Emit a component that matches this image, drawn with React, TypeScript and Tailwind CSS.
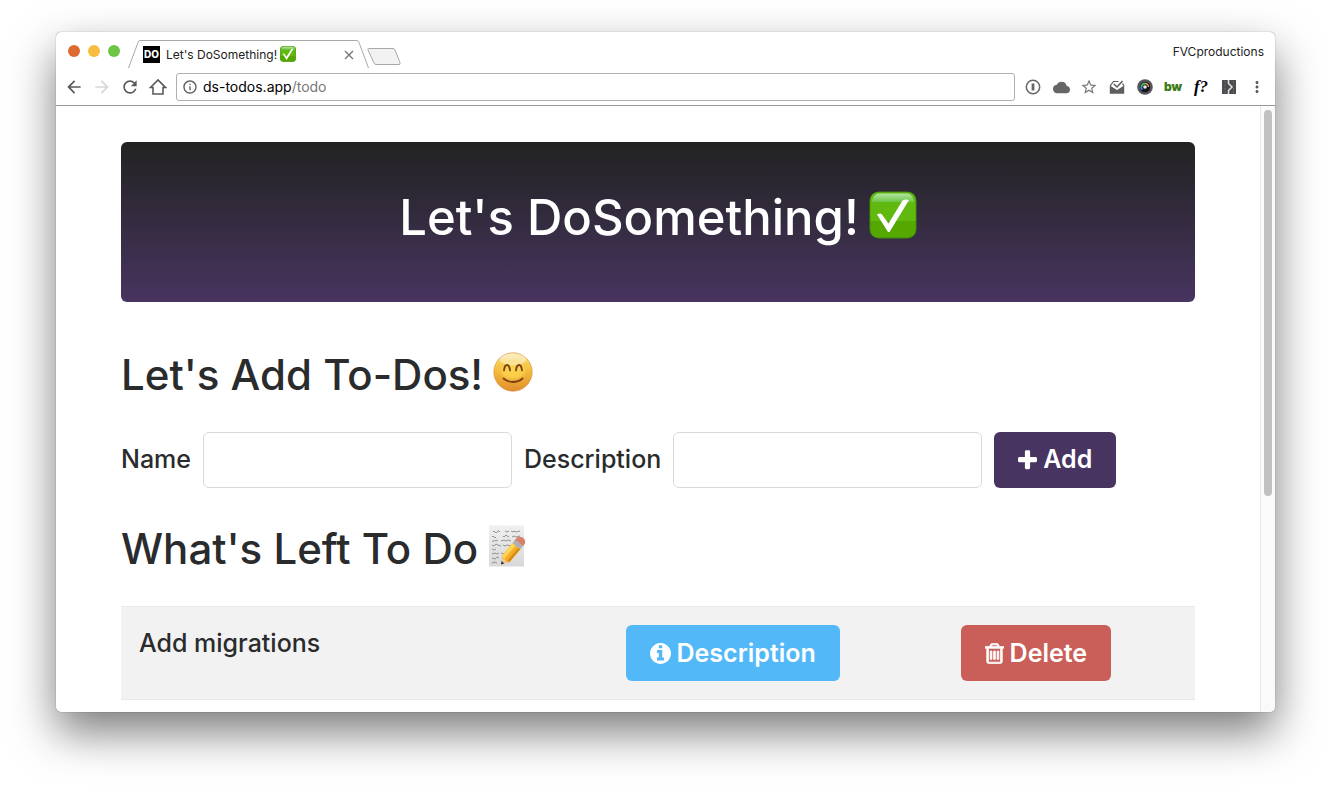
import { ReactNode } from "react";
import { MdArrowBack, MdArrowForward, MdCloud, MdMoreVert, MdOutlineInfo, MdRefresh, MdStarBorder } from "react-icons/md";

interface IconProps {
    className?: string;
}

function PlusIcon() {
    return (
        <svg viewBox="192 128 1408 1536" className="h-[21px] w-[19px]" fill="currentColor">
            <path d="M1600 736v192q0 40-28 68t-68 28h-416v416q0 40-28 68t-68 28h-192q-40 0-68-28t-28-68v-416h-416q-40 0-68-28t-28-68v-192q0-40 28-68t68-28h416v-416q0-40 28-68t68-28h192q40 0 68 28t28 68v416h416q40 0 68 28t28 68z" />
        </svg>
    );
}

function InfoIcon() {
    return (
        <svg viewBox="128 128 1536 1536" className="h-[21px] w-[21px]" fill="currentColor">
            <path d="M1152 1376v-160q0-14-9-23t-23-9h-96v-512q0-14-9-23t-23-9h-320q-14 0-23 9t-9 23v160q0 14 9 23t23 9h96v320h-96q-14 0-23 9t-9 23v160q0 14 9 23t23 9h448q14 0 23-9t9-23zm-128-896v-160q0-14-9-23t-23-9h-192q-14 0-23 9t-9 23v160q0 14 9 23t23 9h192q14 0 23-9t9-23zm640 416q0 209-103 385.5t-279.5 279.5-385.5 103-385.5-103-279.5-279.5-103-385.5 103-385.5 279.5-279.5 385.5-103 385.5 103 279.5 279.5 103 385.5z" />
        </svg>
    );
}

function TrashIcon() {
    return (
        <svg viewBox="192 128 1408 1536" className="h-[21px] w-[19px]" fill="currentColor" stroke="currentColor" strokeWidth="56">
            <path d="M704 736v576q0 14-9 23t-23 9h-64q-14 0-23-9t-9-23v-576q0-14 9-23t23-9h64q14 0 23 9t9 23zm256 0v576q0 14-9 23t-23 9h-64q-14 0-23-9t-9-23v-576q0-14 9-23t23-9h64q14 0 23 9t9 23zm256 0v576q0 14-9 23t-23 9h-64q-14 0-23-9t-9-23v-576q0-14 9-23t23-9h64q14 0 23 9t9 23zm128 724v-948h-896v948q0 22 7 40.5t14.5 27 10.5 8.5h832q3 0 10.5-8.5t14.5-27 7-40.5zm-672-1076h448l-48-117q-7-9-17-11h-317q-10 2-17 11zm928 32v64q0 14-9 23t-23 9h-96v948q0 83-47 143.5t-113 60.5h-832q-66 0-113-58.5t-47-141.5v-952h-96q-14 0-23-9t-9-23v-64q0-14 9-23t23-9h309l70-167q15-37 54-63t79-26h320q40 0 79 26t54 63l70 167h309q14 0 23 9t9 23z" />
        </svg>
    );
}

function CheckEmoji({ className }: IconProps) {
    return (
        <svg viewBox="0 0 48 48" className={className} aria-hidden="true">
            <defs>
                <linearGradient id="gloss" x1="0" y1="0" x2="0" y2="1">
                    <stop offset="0" stopColor="#b4e3a4" />
                    <stop offset="1" stopColor="#6cc644" />
                </linearGradient>
            </defs>
            <rect x="0.5" y="0.5" width="47" height="47" rx="9" fill="#3f8a0a" />
            <rect x="1.5" y="1.5" width="45" height="45" rx="8" fill="#55a800" />
            <path d="M9 1.5h30a7.5 7.5 0 0 1 7.5 8V30h-45V9.5a7.5 7.5 0 0 1 7.5-8z" fill="#61b90f" />
            <path d="M9 2.5h30q5 1 6 8.5H3q1-7.5 6-8.5z" fill="url(#gloss)" />
            <path d="M8 23.5q3-2 5 0l6.500 9L33.500 9.500q3-1.500 6.500-.5L20.500 41h-1.500z" fill="#fff" />
        </svg>
    );
}

function SmileEmoji() {
    return (
        <svg viewBox="0 0 40 40" className="mb-[6px] size-10" aria-hidden="true">
            <defs>
                <linearGradient id="face" x1="0" y1="0" x2="0" y2="1">
                    <stop offset="0" stopColor="#fbe3a0" />
                    <stop offset="0.25" stopColor="#f6cf52" />
                    <stop offset="0.5" stopColor="#f2b93c" />
                    <stop offset="1" stopColor="#e08e2c" />
                </linearGradient>
                <radialGradient id="glow">
                    <stop offset="0" stopColor="#fcd34c" />
                    <stop offset="0.7" stopColor="#fad04a" stopOpacity="0.9" />
                    <stop offset="1" stopColor="#f6c244" stopOpacity="0" />
                </radialGradient>
            </defs>
            <circle cx="20" cy="20" r="19.2" fill="url(#face)" stroke="#d58a3a" strokeWidth="0.6" />
            <ellipse cx="20" cy="18" rx="15" ry="11" fill="url(#glow)" />
            <ellipse cx="20" cy="7.5" rx="13" ry="6" fill="#fff" opacity="0.4" />
            <g fill="none" stroke="#7a3f17" strokeWidth="1.8" strokeLinecap="round">
                <path d="M11 18.5q.5-5.500 3-5.500t3 5.500M23 18.5q.5-5.500 3-5.500t3 5.500" />
                <path d="M10.500 26.500q4 3.500 9.500 3.500t9.500-3.500" />
            </g>
        </svg>
    );
}

function MemoEmoji() {
    return (
        <svg viewBox="0 0 40 42" className="mb-[6px] h-[42px] w-10" aria-hidden="true">
            <defs>
                <linearGradient id="paper" x1="0" y1="0" x2="0" y2="1">
                    <stop offset="0" stopColor="#f0f0f0" />
                    <stop offset="1" stopColor="#d8d8d8" />
                </linearGradient>
            </defs>
            <path d="M1 .5h35v41H1z" fill="url(#paper)" />
            <g fill="none" stroke="#888" strokeWidth="0.9">
                <path d="M5 7q1-2 2 0t2 0 2-1l1 1M17 6l2 1 2-1M23 6l2 1 1-1 2 1 4-1" />
                <path d="M4 12q1-2 2 0t2 0M15 11q1 2 2 0t2 0l2 1M24 12l2-1 2 1 4-1" />
                <path d="M4 16h3l1-1 2 1M13 16l3-1 2 1 2-1 3 1M26 16l3-1 2 1" />
                <path d="M4 20l2 1 2-2 2 1 3 1M15 20l2 1 2-1 4 1" />
                <path d="M4 24l2 1 2-1M4 29l3-1 2 1 2-1M13 28l3 1M4 33l3 1 2-2 2 1M4 38l3-1 2 1" />
            </g>
            <g transform="translate(13 39.5) rotate(-50)">
                <path d="M0 0l8-5v10z" fill="#eac69a" />
                <path d="M0 0l3-1.900v3.800z" fill="#333" />
                <path d="M7 -5h17v10h-17l-1.500-2.500 1-2.500-1-2.500z" fill="#f4ad24" />
                <path d="M7 -5h17v4h-18z" fill="#fcd558" />
                <path d="M7 2.500h17v2.500h-17z" fill="#d98b13" />
                <path d="M24 -5h4v10h-4z" fill="#aab0b8" />
                <path d="M28 -5h3q3.500 1 3.500 5t-3.500 5h-3z" fill="#d9806d" />
            </g>
        </svg>
    );
}

function ExtensionIcons() {
    return (
        <div className="flex items-center text-[#6a6a6a] [&>*]:flex [&>*]:h-7 [&>*]:w-7 [&>*]:items-center [&>*]:justify-center">
            <button aria-label="Password manager">
                <svg viewBox="0 0 16 16" className="size-4" fill="none" stroke="#666">
                    <circle cx="8" cy="8" r="6.7" strokeWidth="1.5" />
                    <path d="M8 4.5v7" strokeWidth="2.8" />
                </svg>
            </button>
            <button aria-label="Cloud"><MdCloud className="size-[17px] text-[#666]" /></button>
            <button aria-label="Bookmark"><MdStarBorder className="size-[18px] text-[#777]" /></button>
            <button aria-label="Inbox">
                <svg viewBox="0 0 16 16" className="size-4">
                    <path d="M.8 6.500L8 11l7.200-4.500v8.300H.8z" fill="#5e5e5e" />
                    <path d="M1.200 6.800L4.500 2.500h5M13.500 4.500l1.500 2.300" fill="none" stroke="#5e5e5e" strokeWidth="1.200" />
                    <path d="M4.800 5L8 8l5.500-6" fill="none" stroke="#5e5e5e" strokeWidth="1.500" />
                </svg>
            </button>
            <button aria-label="Camera">
                <svg viewBox="0 0 16 16" className="size-4">
                    <circle cx="8" cy="8" r="7.8" fill="#57545b" />
                    <circle cx="8" cy="8" r="5.2" fill="#17161c" />
                    <path d="M4.500 8A3.500 3.500 0 0 1 8 4.500" fill="none" stroke="#3dbb6c" strokeWidth="2" />
                    <path d="M8 4.500A3.500 3.500 0 0 1 11.500 8" fill="none" stroke="#f1a13b" strokeWidth="1.500" />
                    <path d="M5.500 10.500q-1.500-1-1.300-2.500" fill="none" stroke="#3f7fe0" strokeWidth="2" />
                    <circle cx="8" cy="8" r="1.800" fill="#e6edf8" />
                </svg>
            </button>
            <button aria-label="Wiki" className="font-[Inter] text-[12px] font-black text-[#3c7a14]">bw</button>
            <button aria-label="Font finder" className="font-['Liberation_Serif'] text-[17px] font-bold italic text-black">f?</button>
            <button aria-label="Reader">
                <svg viewBox="0 0 16 16" className="size-4">
                    <path d="M1 1h14v14H1z" fill="#4b4b50" />
                    <path d="M7.500 1v3.500l3.500 3.500-3.500 3.500v3.500" fill="none" stroke="#e4e4e4" strokeWidth="1.500" />
                    <path d="M4 2v12M12.500 2v12" stroke="#77777c" strokeWidth="0.800" strokeDasharray="1.500 2" />
                </svg>
            </button>
            <button aria-label="Menu"><MdMoreVert className="size-[18px] text-[#5a5a5a]" /></button>
        </div>
    );
}

function TabBar() {
    return (
        <div className="flex h-10 items-start pl-3 pr-[11px]">
            <div className="mt-[13px] flex gap-2">
                <span className="size-3 rounded-full bg-[#dc6b32]" />
                <span className="size-3 rounded-full bg-[#f6bd40]" />
                <span className="size-3 rounded-full bg-[#6cc644]" />
            </div>
            <div className="ml-2 mt-2 flex">
                <svg viewBox="0 0 12 28" className="h-7 w-3" fill="none" stroke="#a9a9a9">
                    <path d="M.5 28L10 2.500Q11 .5 12 .5" />
                </svg>
                <div className="flex h-7 w-[217px] items-center border-t border-[#a9a9a9] pl-[3px]">
                    <span className="flex size-[17px] items-center justify-center bg-black font-[Inter] text-[10px] font-extrabold text-white">DO</span>
                    <span className="ml-[6px] font-[Inter] text-xs text-[#222]">Let's DoSomething!</span>
                    <CheckEmoji className="mb-[2px] ml-[3px] size-4" />
                    <button aria-label="Close tab" className="ml-auto mr-[3px]">
                        <svg viewBox="0 0 10 10" className="size-[10px]" stroke="#777" strokeWidth="1.400">
                            <path d="M1 1l8 8M9 1l-8 8" />
                        </svg>
                    </button>
                </div>
                <svg viewBox="0 0 12 28" className="h-7 w-3" fill="none" stroke="#a9a9a9">
                    <path d="M0 .5Q1 .5 2 2.500L11.500 28" />
                </svg>
            </div>
            <button aria-label="New tab" className="-ml-0.5 mt-4">
                <svg viewBox="0 0 34 17" className="h-[17px] w-[34px]" fill="#f2f2f2" stroke="#a9a9a9">
                    <path d="M1.500.5h24.500q1.500 0 2 1.500l5 12.500q.5 2-1 2H9q-1.500 0-2-1.500L1 2Q.5.500 1.500.500z" />
                </svg>
            </button>
            <span className="ml-auto mt-3 font-[Inter] text-xs leading-4 text-[#222]">FVCproductions</span>
        </div>
    );
}

function Toolbar() {
    return (
        <div className="flex gap-1 border-b border-[#989898] px-1 pb-1 pt-px">
            <div className="flex items-center text-[#5a5a5a] [&>button]:flex [&>button]:w-7 [&>button]:justify-center">
                <button aria-label="Back"><MdArrowBack className="size-5" /></button>
                <button aria-label="Forward"><MdArrowForward className="size-5 text-[#d6d6d6]" /></button>
                <button aria-label="Reload"><MdRefresh className="size-5" /></button>
                <button aria-label="Home">
                    <svg viewBox="0 0 18 18" className="size-[18px]" fill="none" stroke="currentColor" strokeWidth="1.600">
                        <path d="M1.500 9.500L9 2l7.500 7.500H14v6.500H4V9.500z" />
                    </svg>
                </button>
            </div>
            <div className="flex h-7 flex-1 items-center rounded-[3px] border border-[#b0b0b0] pl-[5px] font-[Inter] text-sm">
                <MdOutlineInfo className="mr-[5px] size-4 text-[#5a5a5a]" />
                <span className="text-black">ds-todos.app<span className="text-[#777]">/todo</span></span>
            </div>
            <ExtensionIcons />
        </div>
    );
}

interface ActionButtonProps {
    icon: ReactNode;
    label: string;
    className: string;
}

function ActionButton({ icon, label, className }: ActionButtonProps) {
    return (
        <button className={`inline-flex h-14 items-center gap-[6px] rounded-md px-6 text-[25px] font-semibold text-white ${className}`}>
            {icon}
            {label}
        </button>
    );
}

function TodoPage() {
    return (
        <main className="flex-1 px-[65px] pb-3 pt-9 font-[Inter] font-medium text-[#292b2c]">
            <h1 className="flex items-center justify-center gap-[10px] rounded-md bg-linear-to-b from-[#222222] to-[#483460] pb-14 pt-12 text-[49px] leading-14 text-white">
                Let's DoSomething!
                <CheckEmoji className="mb-[6px] size-12" />
            </h1>

            <h2 className="mb-8 mt-12 flex items-center gap-[10px] text-[42px] leading-[50px]">
                Let's Add To-Dos!
                <SmileEmoji />
            </h2>
            <form className="flex items-center gap-3 text-[25px]">
                <label htmlFor="name">Name</label>
                <input id="name" type="text" className="h-14 w-[309px] rounded-md border border-[#d9d9d9] px-4" />
                <label htmlFor="description">Description</label>
                <input id="description" type="text" className="h-14 w-[309px] rounded-md border border-[#d9d9d9] px-4" />
                <ActionButton icon={<PlusIcon />} label="Add" className="bg-[#483460]" />
            </form>

            <h2 className="mb-8 mt-9 flex items-center gap-[10px] text-[42px] leading-[50px]">
                What's Left To Do
                <MemoEmoji />
            </h2>
            <table className="w-full table-fixed text-[25px] leading-9">
                <tbody>
                    <tr className="border-y border-[#e7e9eb] bg-[#f2f2f2]">
                        <td className="w-[45.3%] p-[18px] align-top">Add migrations</td>
                        <td className="w-[31.2%] p-[18px]">
                            <ActionButton icon={<InfoIcon />} label="Description" className="bg-[#52b8f7]" />
                        </td>
                        <td className="p-[18px]">
                            <ActionButton icon={<TrashIcon />} label="Delete" className="bg-[#ca5e58]" />
                        </td>
                    </tr>
                </tbody>
            </table>
        </main>
    );
}

export default function App() {
    return (
        <div className="min-h-screen bg-white px-14 pb-20 pt-8">
            <div className="overflow-hidden rounded-[5px] bg-white shadow-[0_0_1px_rgba(0,0,0,0.6),0_20px_45px_rgba(0,0,0,0.52)]">
                <TabBar />
                <Toolbar />
                <div className="flex">
                    <TodoPage />
                    <div className="w-[15px] border-l border-[#e8e8e8] bg-[#fafafa] pl-[3px] pt-1">
                        <div className="h-[386px] w-2 rounded-full bg-[#c1c1c1]" />
                    </div>
                </div>
            </div>
        </div>
    );
}
